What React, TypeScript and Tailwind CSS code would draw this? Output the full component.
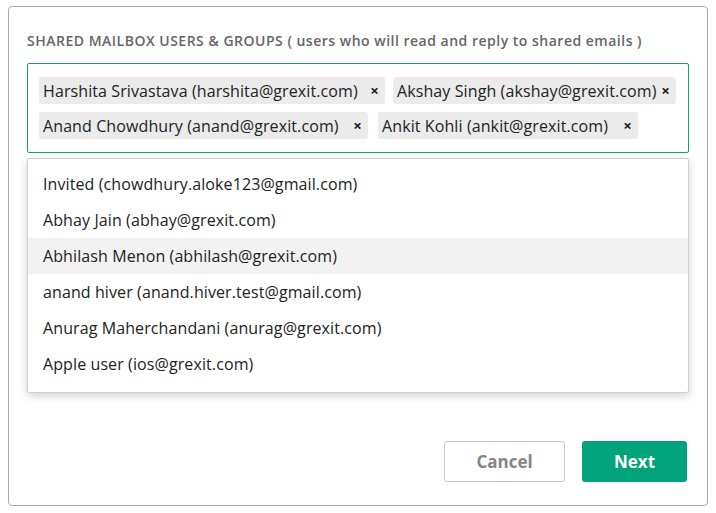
import React from "react";

const chips = [
  { label: "Harshita Srivastava (harshita@grexit.com)", w: "w-[346px]" },
  { label: "Akshay Singh (akshay@grexit.com)", w: "w-[283px]" },
  { label: "Anand Chowdhury (anand@grexit.com)", w: "w-[329px]" },
  { label: "Ankit Kohli (ankit@grexit.com)", w: "w-[260px]" },
];

const options = [
  "Invited (chowdhury.aloke123@gmail.com)",
  "Abhay Jain (abhay@grexit.com)",
  "Abhilash Menon (abhilash@grexit.com)",
  "anand hiver (anand.hiver.test@gmail.com)",
  "Anurag Maherchandani (anurag@grexit.com)",
  "Apple user (ios@grexit.com)",
];

function Chip({ label, w }: { label: string; w: string }) {
  return (
    <div
      className={`${w} h-[27px] flex items-center justify-between pl-[4px] pr-[6px] rounded-[3px] bg-[#ebebeb] text-[16px] tracking-[0.1px] text-[#222]`}
    >
      <span className="whitespace-nowrap">{label}</span>
      <span className="text-[15px] font-bold text-[#222] leading-none">×</span>
    </div>
  );
}

export default function App() {
  return (
    <div
      className="w-[716px] h-[513px] bg-white pt-[6px] pl-[8px]"
      style={{ fontFamily: '"Open Sans", "Liberation Sans", sans-serif' }}
    >
      <div className="w-[700px] h-[500px] border border-[#a9a9a9] rounded-[4px] flex flex-col px-[18px] pt-[24px]">
        <div className="text-[14px] font-semibold text-[#666] leading-[20px] tracking-[0.5px] whitespace-nowrap">
          SHARED MAILBOX USERS &amp; GROUPS ( users who will read and reply to shared emails )
        </div>
        <div className="mt-[12px] w-[662px] h-[90px] border border-[#1a9e78] rounded-[2px] px-[11px] pt-[13px] flex flex-col gap-[8px]">
          <div className="flex gap-[8px]">
            <Chip {...chips[0]} />
            <Chip {...chips[1]} />
          </div>
          <div className="flex gap-[10px]">
            <Chip {...chips[2]} />
            <Chip {...chips[3]} />
          </div>
        </div>
        <div className="mt-[5px] w-[662px] border border-[#d0d0d0] rounded-[2px] bg-white pt-[7px] pb-[10px] shadow-[0_3px_8px_rgba(0,0,0,0.18)]">
          {options.map((o, i) => (
            <div
              key={o}
              className={`h-[36px] flex items-center px-[15px] text-[16px] tracking-[0.1px] text-[#222] ${i === 2 ? "bg-[#f2f2f2]" : ""}`}
            >
              {o}
            </div>
          ))}
        </div>
        <div className="mt-[48px] flex justify-end gap-[17px] pr-[2px]">
          <button className="w-[121px] h-[41px] border border-[#c8c8c8] rounded-[3px] bg-white text-[17px] font-bold text-[#858585]">
            Cancel
          </button>
          <button className="w-[105px] h-[41px] rounded-[3px] bg-[#00a37a] text-[17px] font-bold text-white">
            Next
          </button>
        </div>
      </div>
    </div>
  );
}
